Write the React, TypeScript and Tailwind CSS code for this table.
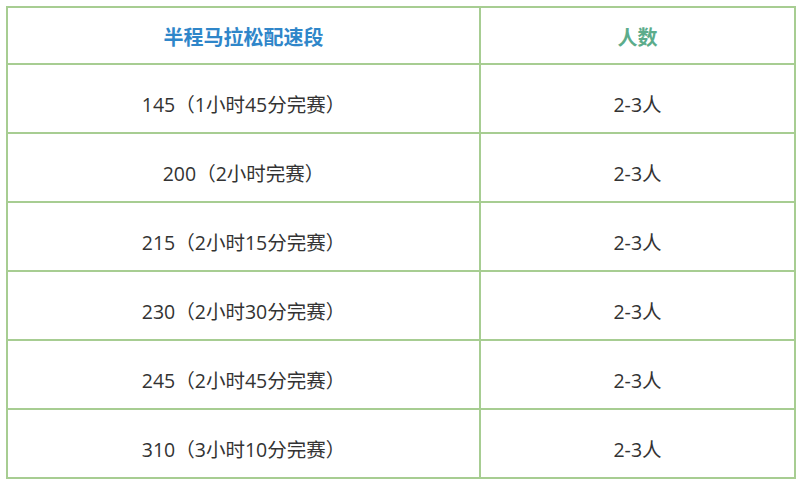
const rows = [
  { pace: '145（1小时45分完赛）', count: '2-3人' },
  { pace: '200（2小时完赛）', count: '2-3人' },
  { pace: '215（2小时15分完赛）', count: '2-3人' },
  { pace: '230（2小时30分完赛）', count: '2-3人' },
  { pace: '245（2小时45分完赛）', count: '2-3人' },
  { pace: '310（3小时10分完赛）', count: '2-3人' },
];

export default function App() {
  return (
    <div
      className="w-[800px] h-[484px] bg-white pt-[6px] pl-[6px]"
      style={{ fontFamily: '"Open Sans", "Noto Sans CJK SC", sans-serif' }}
    >
      <table className="w-[790px] border-collapse border-2 border-[#a7cd92] text-[19.5px] text-[#333]">
        <thead>
          <tr className="h-[57px]">
            <th className="w-[473px] border-2 border-[#a7cd92] pt-[4px] text-[20px] font-bold text-[#2f86c9]">
              半程马拉松配速段
            </th>
            <th className="border-2 border-[#a7cd92] pt-[4px] text-[20px] font-bold text-[#5cac8b]">人数</th>
          </tr>
        </thead>
        <tbody>
          {rows.map((r) => (
            <tr key={r.pace} className="h-[69px]">
              <td className="border-2 border-[#a7cd92] pt-[12px] text-center">{r.pace}</td>
              <td className="border-2 border-[#a7cd92] pt-[12px] text-center">{r.count}</td>
            </tr>
          ))}
        </tbody>
      </table>
    </div>
  );
}
